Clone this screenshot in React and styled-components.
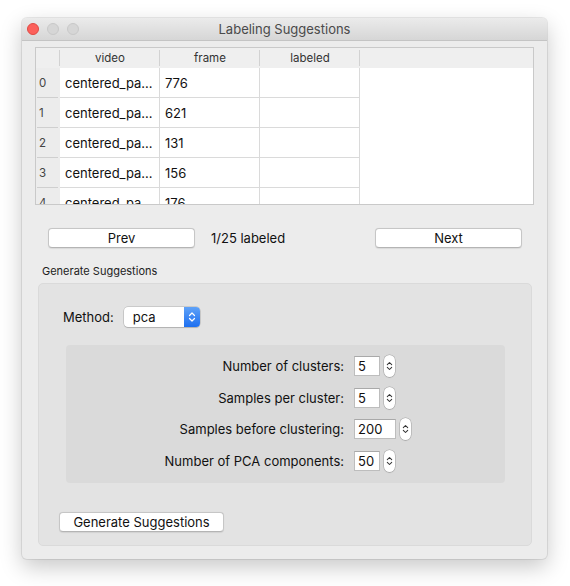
import React from "react";
import styled, { createGlobalStyle } from "styled-components";

const Global = createGlobalStyle`
  html, body { margin: 0; padding: 0; background: #ffffff; }
  body { font-family: Inter, "Liberation Sans", sans-serif; color: #1a1a1a; }
  * { box-sizing: border-box; }
`;

const Page = styled.div`
  width: 570px;
  height: 586px;
  padding: 18px 0 0 22px;
`;

const Window = styled.div`
  width: 525px;
  height: 541px;
  background: #ececec;
  border-radius: 5px;
  box-shadow: 0 0 0 1px rgba(0,0,0,0.08), 0 8px 22px rgba(0,0,0,0.22);
  display: flex;
  flex-direction: column;
  overflow: hidden;
`;

const TitleBar = styled.div`
  height: 23px;
  flex: none;
  position: relative;
  display: flex;
  align-items: center;
  justify-content: center;
  background: linear-gradient(#ebebeb, #d6d6d6);
  border-bottom: 1px solid #c4c4c4;
  font-size: 13px;
  color: #4a4a4a;
`;

const Lights = styled.div`
  position: absolute;
  left: 5px;
  top: 5px;
  display: flex;
  gap: 8px;
`;

const Light = styled.span`
  width: 12px;
  height: 12px;
  border-radius: 50%;
  background: ${(p) => (p.$red ? "#fc605b" : "#d6d6d6")};
  border: 1px solid ${(p) => (p.$red ? "#de4a44" : "#c8c8c8")};
`;

const Content = styled.div`
  flex: 1;
  display: flex;
  flex-direction: column;
  padding: 6px 13px 13px 13px;
`;

const Table = styled.div`
  height: 158px;
  border: 1px solid #c9c9c9;
  background: #ffffff;
  overflow: hidden;
  display: grid;
  grid-template-columns: 24px 100px 100px 100px 1fr;
  grid-auto-rows: 30px;
  grid-template-rows: 20px;
`;

const HeadCell = styled.div`
  height: 20px;
  background: #efefef;
  font-size: 11.5px;
  color: #333;
  display: flex;
  align-items: center;
  justify-content: center;
  position: relative;
  &::after {
    content: "";
    display: ${(p) => (p.$last ? "none" : "block")};
    position: absolute;
    right: 0;
    top: 2px;
    bottom: 2px;
    width: 1px;
    background: #d2d2d2;
  }
`;

const RowHead = styled.div`
  background: #ececec;
  font-size: 11.5px;
  color: #444;
  display: flex;
  align-items: center;
  padding-left: 3px;
  position: relative;
  &::after {
    content: "";
    position: absolute;
    left: 1px;
    right: 2px;
    bottom: 0;
    height: 1px;
    background: #cfcfcf;
  }
`;

const Cell = styled.div`
  font-size: 13px;
  color: #111;
  display: flex;
  align-items: center;
  padding-left: 5px;
  border-right: 1px solid #dadada;
  border-bottom: 1px solid #dadada;
  white-space: nowrap;
  overflow: hidden;
`;

const Filler = styled.div`
  background: #fff;
`;

const NavRow = styled.div`
  margin: 23px 12px 0 13px;
  display: flex;
  align-items: center;
`;

const Button = styled.button`
  height: 20px;
  width: ${(p) => p.$w}px;
  background: #ffffff;
  border: 1px solid #c6c6c6;
  border-bottom-color: #b4b4b4;
  border-radius: 4px;
  font-family: inherit;
  font-size: 13px;
  color: #111;
  padding: 0;
  box-shadow: 0 0.5px 1px rgba(0,0,0,0.08);
`;

const Status = styled.span`
  margin-left: 16px;
  font-size: 13px;
  color: #111;
  flex: 1;
`;

const GroupTitle = styled.div`
  margin: 17px 0 0 7px;
  font-size: 11px;
  line-height: 13px;
  color: #222;
`;

const Group = styled.div`
  margin: 5px 2px 0 3px;
  flex: 1;
  background: #e3e3e3;
  border: 1px solid #dadada;
  border-radius: 5px;
  padding: 23px 26px 12px 26px;
  display: flex;
  flex-direction: column;
`;

const MethodRow = styled.div`
  display: flex;
  align-items: center;
  margin-left: -2px;
  font-size: 13px;
  color: #111;
`;

const Combo = styled.div`
  margin-left: 10px;
  width: 76px;
  height: 20px;
  display: flex;
  background: #fff;
  border-radius: 4px;
  box-shadow: 0 0 0 0.5px rgba(0,0,0,0.22), 0 1px 1px rgba(0,0,0,0.12);
  overflow: hidden;
`;

const ComboText = styled.span`
  flex: 1;
  padding-left: 9px;
  font-size: 13px;
  line-height: 20px;
`;

const ComboArrow = styled.span`
  width: 16px;
  background: linear-gradient(#5fa2f8, #1d6ff0);
  display: flex;
  align-items: center;
  justify-content: center;
`;

const Inner = styled.div`
  margin-top: 18px;
  margin-left: 1px;
  background: #dadada;
  border-radius: 4px;
  padding: 10px 0 11px 0;
  display: grid;
  grid-template-columns: 278px 1fr;
  column-gap: 10px;
  row-gap: 9.5px;
  align-items: center;
`;

const FieldLabel = styled.span`
  justify-self: end;
  font-size: 13px;
  color: #111;
`;

const Spin = styled.div`
  display: flex;
  align-items: center;
  gap: 4px;
  height: 22px;
`;

const SpinBox = styled.div`
  width: ${(p) => p.$w}px;
  height: 20px;
  background: #fff;
  border: 1px solid #bdbdbd;
  border-top-color: #a9a9a9;
  font-size: 13px;
  line-height: 18px;
  padding-left: 3px;
  color: #111;
`;

const Stepper = styled.div`
  width: 11px;
  height: 22px;
  background: #fff;
  border-radius: 5.5px;
  box-shadow: 0 0 0 0.5px rgba(0,0,0,0.25), 0 1px 1px rgba(0,0,0,0.1);
  display: flex;
  align-items: center;
  justify-content: center;
`;

const Footer = styled.div`
  margin-top: 28px;
  margin-left: -6px;
`;

const UpDown = ({ color, w = 8, h = 12 }) => (
  <svg width={w} height={h} viewBox="0 0 8 12">
    <path d="M1.5 4.5 L4 2 L6.5 4.5 M1.5 7.5 L4 10 L6.5 7.5" fill="none" stroke={color} strokeWidth="1.2" strokeLinecap="round" strokeLinejoin="round" />
  </svg>
);

const rows = [
  ["0", "776"],
  ["1", "621"],
  ["2", "131"],
  ["3", "156"],
  ["4", "176"],
];

const fields = [
  ["Number of clusters:", "5", 26],
  ["Samples per cluster:", "5", 26],
  ["Samples before clustering:", "200", 42],
  ["Number of PCA components:", "50", 26],
];

export default function App() {
  return (
    <>
      <Global />
      <Page>
        <Window>
          <TitleBar>
            <Lights>
              <Light $red />
              <Light />
              <Light />
            </Lights>
            Labeling Suggestions
          </TitleBar>
          <Content>
            <Table>
              <HeadCell />
              <HeadCell>video</HeadCell>
              <HeadCell>frame</HeadCell>
              <HeadCell>labeled</HeadCell>
              <HeadCell $last />
              {rows.map(([i, f]) => (
                <React.Fragment key={i}>
                  <RowHead>{i}</RowHead>
                  <Cell>centered_pa...</Cell>
                  <Cell>{f}</Cell>
                  <Cell />
                  <Filler />
                </React.Fragment>
              ))}
            </Table>
            <NavRow>
              <Button $w={147}>Prev</Button>
              <Status>1/25 labeled</Status>
              <Button $w={147}>Next</Button>
            </NavRow>
            <GroupTitle>Generate Suggestions</GroupTitle>
            <Group>
              <MethodRow>
                Method:
                <Combo>
                  <ComboText>pca</ComboText>
                  <ComboArrow>
                    <UpDown color="#fff" />
                  </ComboArrow>
                </Combo>
              </MethodRow>
              <Inner>
                {fields.map(([label, value, w]) => (
                  <React.Fragment key={label}>
                    <FieldLabel>{label}</FieldLabel>
                    <Spin>
                      <SpinBox $w={w}>{value}</SpinBox>
                      <Stepper>
                        <UpDown color="#333" w={7} h={12} />
                      </Stepper>
                    </Spin>
                  </React.Fragment>
                ))}
              </Inner>
              <Footer>
                <Button $w={165}>Generate Suggestions</Button>
              </Footer>
            </Group>
          </Content>
        </Window>
      </Page>
    </>
  );
}
